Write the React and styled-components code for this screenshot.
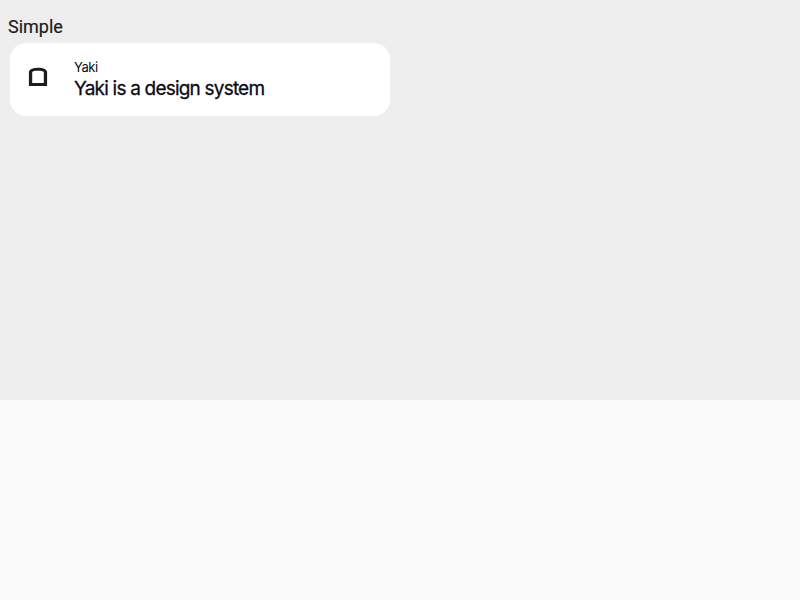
import React from "react";
import styled, { createGlobalStyle } from "styled-components";

const GlobalStyle = createGlobalStyle`
  * { box-sizing: border-box; }
  body { margin: 0; background: #fafafa; }
`;

const Stage = styled.main`
  height: 400px;
  padding: 16px 8px 0;
  background: #eeeeee;
`;

const Heading = styled.h1`
  margin: 0;
  height: 27px;
  font: 400 18px/21px Roboto, sans-serif;
  color: #1c1c1c;
  -webkit-text-stroke: 0.2px #1c1c1c;
`;

const Card = styled.article`
  display: flex;
  align-items: center;
  gap: 26px;
  width: 380px;
  height: 73px;
  margin-left: 2px;
  padding-left: 18px;
  border-radius: 16px;
  background: #ffffff;
`;

const Icon = styled.svg`
  display: block;
  width: 20px;
  height: 20px;
  margin-bottom: 5px;
`;

const Texts = styled.div`
  display: flex;
  flex-direction: column;
  padding-top: 1px;
  color: #0c0c12;
  font-family: Inter, sans-serif;
`;

const Label = styled.span`
  font-size: 13px;
  line-height: 16px;
  letter-spacing: -0.45px;
`;

const Description = styled.span`
  margin-top: 1px;
  margin-bottom: -1px;
  font-size: 19px;
  font-weight: 400;
  line-height: 26px;
  letter-spacing: -0.8px;
  -webkit-text-stroke: 0.3px #0c0c12;
`;

export default function App() {
  return (
    <>
      <GlobalStyle />
      <Stage>
        <Heading>Simple</Heading>
        <Card>
          <Icon viewBox="0 0 20 20" aria-hidden="true">
            <path
              d="M0.9 19V4.6C2 1.8 5 0.7 10 0.7S18 1.8 19.1 4.6V19ZM4.2 15.9H15.8V5C15 4.1 13.5 3.7 10 3.7S5 4.1 4.2 5Z"
              fill="#1d1d1b"
              fillRule="evenodd"
            />
          </Icon>
          <Texts>
            <Label>Yaki</Label>
            <Description>Yaki is a design system</Description>
          </Texts>
        </Card>
      </Stage>
    </>
  );
}
